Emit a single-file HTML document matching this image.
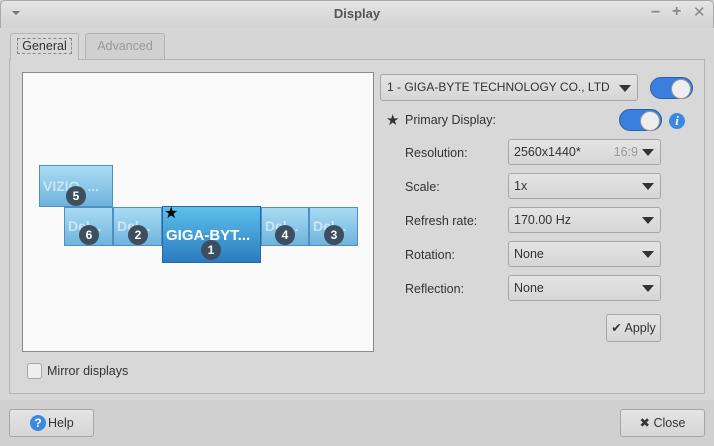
<!DOCTYPE html><html><head><style>
*{box-sizing:border-box;margin:0;padding:0}
body{width:714px;height:446px;background:#d0d0d0;font-family:"Liberation Sans","DejaVu Sans",sans-serif;font-size:12.5px;color:#333;position:relative;overflow:hidden}
.a{position:absolute}
.title{left:0;top:0;width:714px;height:28px;background:linear-gradient(#e4e4e4,#d2d2d2);border:1px solid #a8a8a8;border-bottom:none;border-radius:5px 5px 0 0}
.panel{left:9px;top:59px;width:696px;height:335px;background:#d8d8d8;border:1px solid #b4b4b4}
.tab{height:26px;border:1px solid #b4b4b4;border-bottom:none;border-radius:3px 3px 0 0;text-align:center;line-height:24px}
.btn{background:linear-gradient(#e4e4e4,#d6d6d6);border:1px solid #a6a6a6;border-radius:3px}
.combo{left:508px;width:153px;height:26px;padding-left:5px;line-height:24px}
.arr{position:absolute;right:6px;top:9px;border-left:6px solid transparent;border-right:6px solid transparent;border-top:7px solid #333}
.lbl{left:405px}
.mon{background:linear-gradient(#a9dcf2,#6eb3dd);border:1px solid #4f8fc4;color:rgba(255,255,255,.55);font-weight:bold;font-size:14px;overflow:hidden;white-space:nowrap;padding-left:3px}
.num{position:absolute;width:20px;height:20px;border-radius:10px;background:#3d4f5e;color:#fff;font-size:12px;text-align:center;line-height:20px;font-weight:bold}
.tog{width:43px;height:22px;border-radius:11px;background:#3b7fde;border:1px solid #2a5fa8}
.tog::after{content:"";position:absolute;right:1px;top:1px;width:18px;height:18px;border-radius:10px;background:#eee;border:1px solid #999}
</style></head><body>
<div class="a title"></div>
<div class="a" style="left:12px;top:11px;border-left:4px solid transparent;border-right:4px solid transparent;border-top:4px solid #777"></div>
<div class="a" style="left:0;top:6px;width:714px;text-align:center;font-weight:bold;color:#555;font-size:13px">Display</div>
<div class="a" style="left:651px;top:4px;color:#888;font-size:16px;font-weight:bold">−</div>
<div class="a" style="left:672px;top:3px;color:#888;font-size:16px;font-weight:bold">+</div>
<div class="a" style="left:693px;top:3px;color:#888;font-size:15px;font-weight:bold">✕</div>
<div class="a" style="left:0;top:28px;width:714px;height:372px;background:#d6d6d6"></div>
<div class="a panel"></div>
<div class="a tab" style="left:10px;top:33px;width:69px;height:27px;background:#d8d8d8"><span style="border:1px dashed #888;padding:0 4px">General</span></div>
<div class="a tab" style="left:85px;top:33px;width:80px;color:#999;background:#d0d0d0">Advanced</div>
<div class="a" style="left:22px;top:72px;width:352px;height:280px;background:#fafafa;border:1px solid #888"></div>
<div class="a mon" style="left:39px;top:165px;width:74px;height:42px;line-height:40px">VIZIO, ...</div><div class="num" style="left:66px;top:186px">5</div>
<div class="a mon" style="left:64px;top:207px;width:49px;height:39px;line-height:36px">Del...</div><div class="num" style="left:79px;top:225px">6</div>
<div class="a mon" style="left:113px;top:207px;width:49px;height:39px;line-height:36px">Del...</div><div class="num" style="left:128px;top:225px">2</div>
<div class="a mon" style="left:261px;top:207px;width:48px;height:39px;line-height:36px">Del...</div><div class="num" style="left:275px;top:225px">4</div>
<div class="a mon" style="left:309px;top:207px;width:49px;height:39px;line-height:36px">Del...</div><div class="num" style="left:324px;top:225px">3</div>
<div class="a mon" style="left:162px;top:206px;width:99px;height:57px;line-height:58px;background:linear-gradient(#5ec0ea,#2a7cc0);border-color:#2a66a8;color:#fff;font-size:15px">GIGA-BYT...</div>
<div class="num" style="left:201px;top:240px">1</div>
<div class="a" style="left:164px;top:203px;font-size:16px;color:#000">★</div>
<div class="a btn" style="left:380px;top:74px;width:258px;height:27px;line-height:25px;padding-left:6px;font-size:12px;white-space:nowrap;overflow:hidden"><span style="display:inline-block;width:222px;overflow:hidden;vertical-align:top">1 - GIGA-BYTE TECHNOLOGY CO., LTD. ...</span><div class="arr" style="top:10px"></div></div>
<div class="a tog" style="left:650px;top:77px"></div>
<div class="a" style="left:386px;top:111px;font-size:15px;color:#333">★</div>
<div class="a" style="left:405px;top:113px">Primary Display:</div>
<div class="a tog" style="left:619px;top:109px"></div>
<div class="a" style="left:669px;top:113px;width:16px;height:16px;border-radius:8px;background:#3b88e0;color:#fff;font-style:italic;font-weight:bold;font-family:'Liberation Serif',serif;font-size:13px;text-align:center;line-height:16px">i</div>
<div class="a lbl" style="top:146px">Resolution:</div>
<div class="a lbl" style="top:180px">Scale:</div>
<div class="a lbl" style="top:214px">Refresh rate:</div>
<div class="a lbl" style="top:248px">Rotation:</div>
<div class="a lbl" style="top:282px">Reflection:</div>
<div class="a btn combo" style="top:139px">2560x1440*<span style="position:absolute;right:22px;color:#999">16:9</span><div class="arr"></div></div>
<div class="a btn combo" style="top:173px">1x<div class="arr"></div></div>
<div class="a btn combo" style="top:207px">170.00 Hz<div class="arr"></div></div>
<div class="a btn combo" style="top:241px">None<div class="arr"></div></div>
<div class="a btn combo" style="top:275px">None<div class="arr"></div></div>
<div class="a btn" style="left:606px;top:314px;width:55px;height:28px;line-height:26px;text-align:center">✔ Apply</div>
<div class="a btn" style="left:27px;top:363px;width:15px;height:16px;background:#eee"></div>
<div class="a" style="left:47px;top:364px">Mirror displays</div>
<div class="a btn" style="left:9px;top:409px;width:85px;height:28px;line-height:26px;padding-left:20px"><span style="position:absolute;left:20px;top:5px;width:16px;height:16px;border-radius:8px;background:#3b88e0;color:#fff;font-size:12px;text-align:center;line-height:16px;font-weight:bold">?</span><span style="margin-left:18px">Help</span></div>
<div class="a btn" style="left:620px;top:409px;width:85px;height:28px;line-height:26px;text-align:center">✖ Close</div>
</body></html>
